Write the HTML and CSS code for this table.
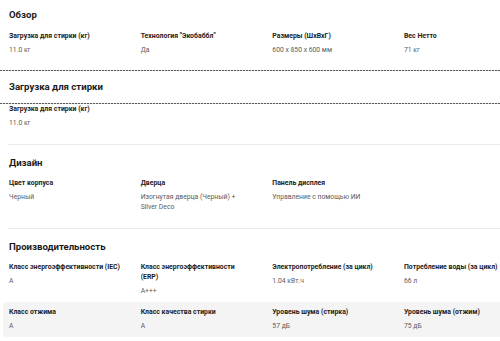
FILE: index.html
```html
<!DOCTYPE html>
<html lang="ru">
<head>
<meta charset="utf-8">
<title>Характеристики</title>
<link rel="stylesheet" href="styles.css">
</head>
<body>
<div class="specs">
  <section class="section section--first">
    <h2 class="heading">Обзор</h2>
    <div class="row">
      <div class="cell"><div class="label">Загрузка для стирки (кг)</div><div class="value">11.0 кг</div></div>
      <div class="cell"><div class="label">Технология "Экобаббл"</div><div class="value">Да</div></div>
      <div class="cell"><div class="label">Размеры (ШxВxГ)</div><div class="value">600 x 850 x 600 мм</div></div>
      <div class="cell"><div class="label">Вес Нетто</div><div class="value">71 кг</div></div>
    </div>
  </section>
  <section class="section">
    <div class="dashed-head">
      <h2 class="heading">Загрузка для стирки</h2>
    </div>
    <div class="row row--flush">
      <div class="cell"><div class="label">Загрузка для стирки (кг)</div><div class="value">11.0 кг</div></div>
    </div>
  </section>
  <hr class="divider">
  <section class="section section--ruled">
    <h2 class="heading">Дизайн</h2>
    <div class="row">
      <div class="cell"><div class="label">Цвет корпуса</div><div class="value">Черный</div></div>
      <div class="cell"><div class="label">Дверца</div><div class="value">Изогнутая дверца (Черный) + Silver Deco</div></div>
      <div class="cell"><div class="label">Панель дисплея</div><div class="value">Управление с помощью ИИ</div></div>
    </div>
  </section>
  <hr class="divider">
  <section class="section section--ruled">
    <h2 class="heading">Производительность</h2>
    <div class="row">
      <div class="cell"><div class="label">Класс энергоэффективности (IEC)</div><div class="value">A</div></div>
      <div class="cell"><div class="label">Класс энергоэффективности (ERP)</div><div class="value">A+++</div></div>
      <div class="cell"><div class="label">Электропотребление (за цикл)</div><div class="value">1.04 кВт.ч</div></div>
      <div class="cell"><div class="label">Потребление воды (за цикл)</div><div class="value">66 л</div></div>
    </div>
    <div class="row row--alt">
      <div class="cell"><div class="label">Класс отжима</div><div class="value">A</div></div>
      <div class="cell"><div class="label">Класс качества стирки</div><div class="value">A</div></div>
      <div class="cell"><div class="label">Уровень шума (стирка)</div><div class="value">57 дБ</div></div>
      <div class="cell"><div class="label">Уровень шума (отжим)</div><div class="value">75 дБ</div></div>
    </div>
  </section>
</div>
</body>
</html>
```
FILE: styles.css
```css
html, body {
  margin: 0;
  padding: 0;
  background: #ffffff;
  overflow: hidden;
}

body {
  font-family: Roboto, "Noto Sans", "Liberation Sans", sans-serif;
  color: #1a1a1a;
}

.specs {
  display: flex;
  flex-direction: column;
}

.section {
  padding: 0 0 10px;
}

.section--first {
  padding-top: 8px;
  padding-bottom: 9px;
}

.section--ruled {
  padding-top: 10px;
}

.heading {
  margin: 0 0 3px;
  padding: 1px 0 0 9px;
  font-size: 9.6px;
  line-height: 14px;
  font-weight: 700;
  color: #1a1a1a;
}

.section--first .heading {
  margin-bottom: 4px;
  padding-top: 0;
}

.dashed-head {
  padding: 9px 0 10px;
  background-image:
    repeating-linear-gradient(to right, #5a5a5a 0 2px, #d8d8d8 2px 3px),
    repeating-linear-gradient(to right, #5a5a5a 0 2px, #d8d8d8 2px 3px);
  background-size: 100% 1px, 100% 1px;
  background-position: 0 0, 0 100%;
  background-repeat: no-repeat;
}

.dashed-head .heading {
  margin: 0;
}

.divider {
  margin: 0 0 0 8px;
  border: 0;
  height: 1px;
  background: #ebebeb;
}

.row {
  display: grid;
  grid-template-columns: repeat(4, 111.5px);
  column-gap: 20.17px;
  width: max-content;
  padding: 5px 6px 6.5px 9px;
}

.row--flush {
  padding-top: 0;
}

.row--alt {
  margin-left: 3px;
  padding-left: 6px;
  background: #f4f4f4;
  border-radius: 4px;
}

.label {
  font-size: 6.9px;
  line-height: 10px;
  font-weight: 700;
  color: #222222;
}

.value {
  margin-top: 3.5px;
  font-size: 6.8px;
  line-height: 10px;
  color: #5c5c5c;
}
```
